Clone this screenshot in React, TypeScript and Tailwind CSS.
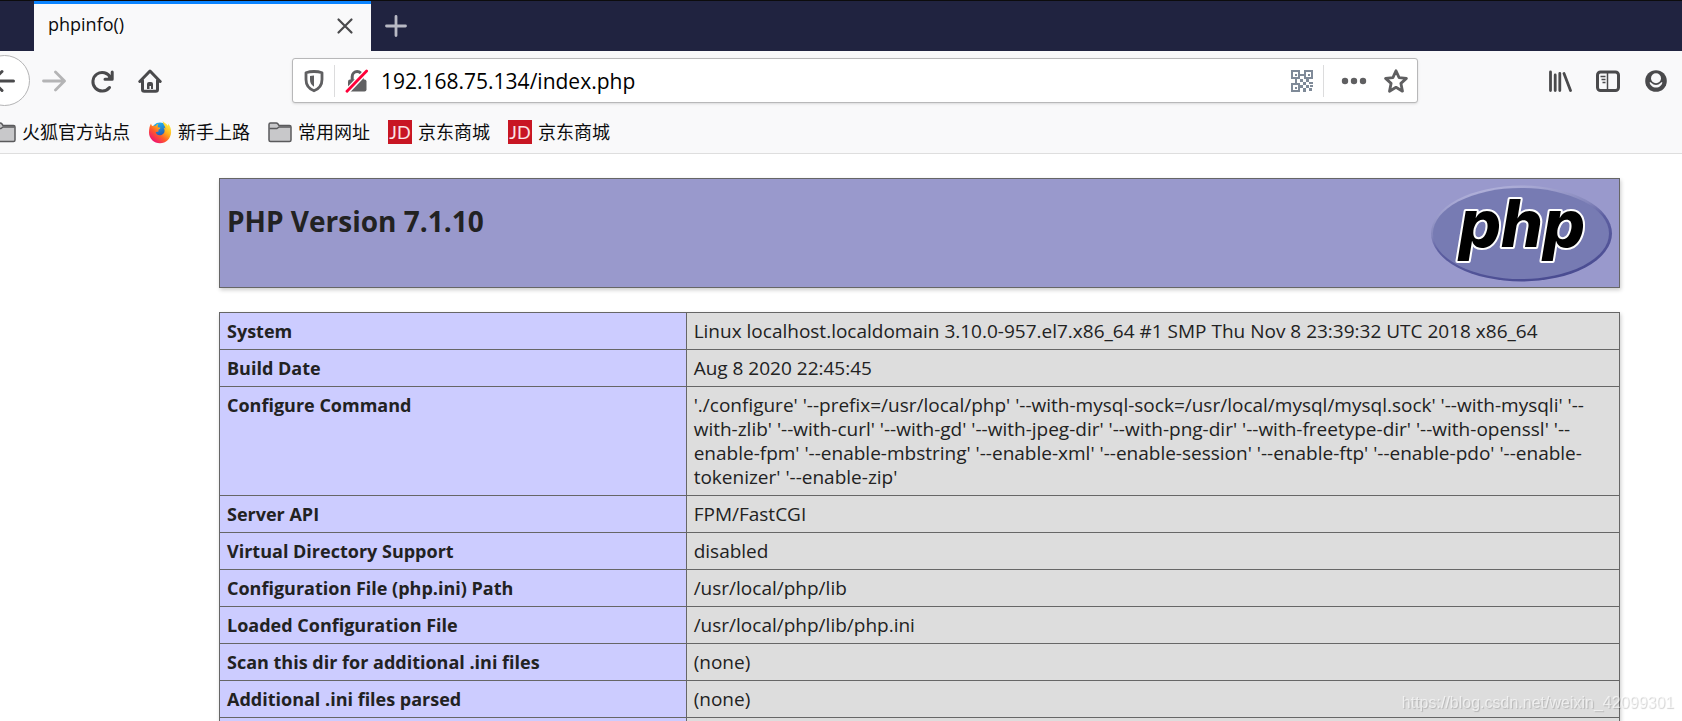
import { useState } from "react";
import type { ReactNode } from "react";

const info = [
  { name: "System", value: "Linux localhost.localdomain 3.10.0-957.el7.x86_64 #1 SMP Thu Nov 8 23:39:32 UTC 2018 x86_64" },
  { name: "Build Date", value: "Aug 8 2020 22:45:45" },
  {
    name: "Configure Command",
    value:
      "'./configure' '--prefix=/usr/local/php' '--with-mysql-sock=/usr/local/mysql/mysql.sock' '--with-mysqli' '--\nwith-zlib' '--with-curl' '--with-gd' '--with-jpeg-dir' '--with-png-dir' '--with-freetype-dir' '--with-openssl' '--\nenable-fpm' '--enable-mbstring' '--enable-xml' '--enable-session' '--enable-ftp' '--enable-pdo' '--enable-\ntokenizer' '--enable-zip'",
  },
  { name: "Server API", value: "FPM/FastCGI" },
  { name: "Virtual Directory Support", value: "disabled" },
  { name: "Configuration File (php.ini) Path", value: "/usr/local/php/lib" },
  { name: "Loaded Configuration File", value: "/usr/local/php/lib/php.ini" },
  { name: "Scan this dir for additional .ini files", value: "(none)" },
  { name: "Additional .ini files parsed", value: "(none)" },
  { name: "", value: "" },
];

function BackIcon() {
  return (
    <svg viewBox="0 0 24 24" className="h-6 w-6" fill="none" stroke="#4a4a4c" strokeWidth="3" strokeLinecap="round" strokeLinejoin="round">
      <path d="M22.5 12H2M11 2.5 1.5 12l9.500 9.500" />
    </svg>
  );
}

function ForwardIcon() {
  return (
    <svg viewBox="0 0 24 24" className="h-6 w-6" fill="none" stroke="#b4b4b5" strokeWidth="2.800" strokeLinecap="round" strokeLinejoin="round">
      <path d="M1.500 12H22M13.500 3l9 9-9 9" />
    </svg>
  );
}

function ReloadIcon() {
  return (
    <svg viewBox="0 0 24 24" className="h-6 w-6" fill="none" stroke="#4a4a4c" strokeWidth="3" strokeLinecap="round" strokeLinejoin="round">
      <path d="M19.500 18.500A9.300 9.300 0 1 1 20.500 8.500" />
      <path d="M22.200 3v7.200H15" />
      <path d="M22.200 6v4.200H17z" fill="#4a4a4c" strokeWidth="1" />
    </svg>
  );
}

function HomeIcon() {
  return (
    <svg viewBox="0 0 24 24" className="h-6 w-6" fill="none" stroke="#4a4a4c" strokeWidth="3" strokeLinecap="round" strokeLinejoin="round">
      <path d="M1.800 12.500 12 2l10.200 10.500" />
      <path d="M4.500 11.500v9q0 1.800 1.800 1.800h11.400q1.800 0 1.800-1.800v-9" />
      <path d="M9 20v-5q0-2 2-2h2q2 0 2 2v5h-2v-3h-1.500v3z" fill="#4a4a4c" stroke="none" />
    </svg>
  );
}

function ShieldIcon() {
  return (
    <svg viewBox="0 0 24 24" className="h-6 w-6 shrink-0">
      <path d="M12 2.500c3 0 5.500.4 8 1.300v6.700c0 5.500-3.500 9.500-8 11.300-4.500-1.800-8-5.800-8-11.300V3.800c2.500-.9 5-1.300 8-1.300z" fill="none" stroke="#5f5f61" strokeWidth="2.800" strokeLinejoin="round" />
      <path d="M12 6.500v11.200c-2.700-1.800-4-4.200-4-7.300V7.100c1.300-.4 2.600-.6 4-.6z" fill="#5f5f61" />
    </svg>
  );
}

function InsecureLockIcon() {
  return (
    <svg viewBox="0 0 24 24" className="h-6 w-6 shrink-0">
      <path d="M7.200 12V7.500a5 5 0 0 1 10 0V12" fill="none" stroke="#606062" strokeWidth="3" />
      <rect x="3" y="10.500" width="18.500" height="12" rx="2" fill="#606062" />
      <path d="M2.500 22 21.500 2.200" stroke="#fff" strokeWidth="5.500" />
      <path d="M2 22.200 21.600 2" stroke="#ff0039" strokeWidth="2.800" strokeLinecap="round" />
    </svg>
  );
}

function QrIcon() {
  return (
    <svg viewBox="0 0 22 22" className="h-[22px] w-[22px]" fill="#7f8a98" shapeRendering="crispEdges">
      <path fillRule="evenodd" d="M0 0h9v9H0zM2 2v5h5V2zM13 0h9v9h-9zM15 2v5h5V2zM0 13h9v9H0zM2 15v5h5v-5z" />
      <path d="M3.500 3.500h2v2h-2zM16.500 3.500h2v2h-2zM3.500 16.500h2v2h-2zM9 4h4v2H9zM4 9h2v4H4zM9 9h3v3H9zM12 12h3v3h-3zM15 9h3v3h-3zM18 12h4v2h-4zM9 15h3v3H9zM15 15h3v3h-3zM12 18h3v4h-3zM18 18h3v3h-3zM19 15h3v2h-3z" />
    </svg>
  );
}

function StarIcon() {
  return (
    <svg viewBox="0 0 24 24" className="h-6 w-6" fill="none" stroke="#5f5f61" strokeWidth="2.800" strokeLinejoin="round">
      <path d="m12 1.800 3.100 6.800 7.300.8-5.500 5 1.600 7.800-6.500-3.900-6.500 3.900 1.600-7.800-5.500-5 7.300-.8z" />
    </svg>
  );
}

function LibraryIcon() {
  return (
    <svg viewBox="0 0 24 24" className="h-6 w-6" fill="none" stroke="#4a4a4c" strokeWidth="2.800" strokeLinecap="round">
      <path d="M2.500 3v18.500M7.200 6v15.500M11.800 4.500v17M16 4.500l6.500 17" />
    </svg>
  );
}

function SidebarIcon() {
  return (
    <svg viewBox="0 0 24 24" className="h-6 w-6" fill="none" stroke="#4a4a4c">
      <rect x="1.500" y="3" width="21" height="18.500" rx="3" strokeWidth="3" />
      <path d="M11.500 3v18" strokeWidth="1.500" />
      <path d="M4.500 7.500h5M5.500 10.500h4M6.500 13.500h3" strokeWidth="1.500" />
    </svg>
  );
}

function AccountIcon() {
  return (
    <svg viewBox="0 0 24 24" className="h-6 w-6">
      <circle cx="12" cy="12" r="10.800" fill="#4a4a4c" />
      <path d="M5.600 13.200h12.800c-.6 3.200-3 5.300-6.400 5.300s-5.800-2.100-6.400-5.300z" fill="#f9f9fa" />
      <circle cx="12" cy="9.500" r="6.400" fill="#4a4a4c" />
      <circle cx="12" cy="9.200" r="5" fill="#f9f9fa" />
    </svg>
  );
}

function FolderIcon() {
  return (
    <svg viewBox="0 0 24 24" className="h-6 w-6 shrink-0" stroke="#5a5a5c" strokeWidth="1.500" strokeLinejoin="round">
      <path d="M1 20V4.500Q1 3 2.500 3h5.700q1 0 1.600.8L11 5.500h10.500Q23 5.500 23 7v13q0 1.500-1.500 1.500h-19Q1 21.500 1 20z" fill="#c8c8ca" />
      <path d="M1.500 8.500H9l2-1.500h11.500" fill="none" />
    </svg>
  );
}

function FirefoxIcon() {
  return (
    <svg viewBox="0 0 24 24" className="h-6 w-6 shrink-0">
      <defs>
        <linearGradient id="fire" x1="0.850" y1="0.100" x2="0.200" y2="0.900">
          <stop offset="0" stopColor="#fff044" />
          <stop offset="0.350" stopColor="#ffb21b" />
          <stop offset="0.650" stopColor="#ff5a2a" />
          <stop offset="1" stopColor="#f0146e" />
        </linearGradient>
        <linearGradient id="globe" x1="0.300" y1="0" x2="0.600" y2="1">
          <stop offset="0" stopColor="#20b6f4" />
          <stop offset="1" stopColor="#263e9e" />
        </linearGradient>
      </defs>
      <circle cx="12" cy="11" r="8.500" fill="url(#globe)" />
      <path
        fill="url(#fire)"
        d="M3 3.500c.2 1.200.6 2 1.200 2.600 1-.4 2.200-.5 3.300-.2C8.300 4.800 9.400 4 10.500 3.700 9.700 4.800 9.500 6.200 9.900 7.200c.8.3 1.800.4 2.500.5-.1 1-1 1.500-1.900 2 .2 1-.1 1.800-.3 2.200-1.300-.3-2-.1-2.600.4 1 2.900 3.600 3.500 5.900 2.600 3.500-1.300 3.800-5.200 2-7.200.8.1 1.500.5 2 1C17 5.500 14.900 4.300 14.700 1c1.300 1.800 3.800 2.400 5.200 4.700.3-.9.200-1.600 0-2.300 2.500 2.500 3.400 5.600 3.200 9.100-.4 6.300-5.100 10.800-11.100 10.800S1 18.800 1 12.600C1 9 1.600 5.900 3 3.500z"
      />
    </svg>
  );
}

function JdIcon() {
  return (
    <svg viewBox="0 0 24 24" className="h-6 w-6 shrink-0">
      <rect width="24" height="24" fill="#c81623" />
      <text x="12" y="19" textAnchor="middle" fontFamily="Lato, sans-serif" fontSize="18" fill="#fbe4e5">
        JD
      </text>
    </svg>
  );
}

function PhpLogo() {
  return (
    <svg viewBox="0 0 181 97" className="h-[97px] w-[181px] shrink-0 overflow-visible" role="img" aria-label="PHP logo">
      <defs>
        <linearGradient id="rim" x1="0.300" y1="0" x2="0.700" y2="1">
          <stop offset="0" stopColor="#b4b4dc" />
          <stop offset="0.350" stopColor="#8486bb" />
          <stop offset="0.500" stopColor="#5c5ea0" />
          <stop offset="1" stopColor="#484a90" />
        </linearGradient>
      </defs>
      <ellipse cx="90.500" cy="48.500" rx="90.500" ry="48" fill="url(#rim)" />
      <ellipse cx="90" cy="48.500" rx="88" ry="45.500" fill="#777bb3" />
      <text
        x="28"
        y="62"
        fontFamily="Inter, sans-serif"
        fontSize="66"
        fontWeight="800"
        fontStyle="italic"
        fill="#000"
        stroke="#fff"
        strokeWidth="4"
        strokeLinejoin="round"
        paintOrder="stroke"
      >
        php
      </text>
    </svg>
  );
}

function IconButton({ label, children }: { label: string; children: ReactNode }) {
  return (
    <button type="button" aria-label={label} className="flex h-6 w-6 shrink-0 items-center justify-center">
      {children}
    </button>
  );
}

function Bookmark({ icon, children }: { icon: ReactNode; children: ReactNode }) {
  return (
    <a href="#" className="flex shrink-0 items-center gap-1.5">
      {icon}
      <span>{children}</span>
    </a>
  );
}

function TabBar() {
  return (
    <div className="flex h-[51px] shrink-0 border-t border-[#0c0c0d] bg-[#202340] pl-[34px]">
      <div className="flex w-[337px] items-start justify-between border-t-[3px] border-[#0a84ff] bg-[#f9f9fa] pt-2 pr-4 pl-3.5">
        <span className="text-lg leading-6 text-[#0c0c0d]">phpinfo()</span>
        <button type="button" aria-label="Close tab" className="pt-1">
          <svg viewBox="0 0 20 20" className="h-5 w-5" stroke="#4a4a4c" strokeWidth="2.200" strokeLinecap="round">
            <path d="m3.500 3.500 13 13M16.500 3.500l-13 13" />
          </svg>
        </button>
      </div>
      <button type="button" aria-label="New tab" className="px-3.5">
        <svg viewBox="0 0 22 22" className="h-[22px] w-[22px]" stroke="#b8b9c4" strokeWidth="2.800" strokeLinecap="round">
          <path d="M11 1.500v19M1.500 11h19" />
        </svg>
      </button>
    </div>
  );
}

function NavBar() {
  const [url, setUrl] = useState("192.168.75.134/index.php");

  return (
    <div className="flex h-[59px] shrink-0 items-center pr-3.5">
      <button
        type="button"
        aria-label="Back"
        className="-ml-[21px] flex h-[51px] w-[51px] shrink-0 items-center justify-center rounded-full border border-[#b4b4b5] bg-white pr-1"
      >
        <BackIcon />
      </button>
      <div className="ml-3 flex gap-6">
        <IconButton label="Forward"><ForwardIcon /></IconButton>
        <IconButton label="Reload"><ReloadIcon /></IconButton>
        <IconButton label="Home"><HomeIcon /></IconButton>
      </div>
      <div className="mr-[130px] ml-[130px] flex h-[45px] min-w-0 flex-1 items-center rounded-[3px] border border-[#b8b8b9] bg-white pr-[9px] pl-[9px] shadow-sm">
        <ShieldIcon />
        <span className="mr-2.5 ml-2 h-8 w-px bg-[#dcdcdd]" />
        <InsecureLockIcon />
        <input
          aria-label="Address"
          value={url}
          onChange={(e) => setUrl(e.target.value)}
          className="ml-3 min-w-0 flex-1 bg-transparent pt-0.5 text-[21px] text-black outline-none"
        />
        <button type="button" aria-label="QR code"><QrIcon /></button>
        <span className="mr-[17px] ml-2.5 h-8 w-px bg-[#dcdcdd]" />
        <button type="button" aria-label="Page actions" className="mr-[17px]">
          <svg viewBox="0 0 26 8" className="h-2 w-[26px]" fill="#5f5f61">
            <circle cx="4" cy="4" r="3.200" />
            <circle cx="13" cy="4" r="3.200" />
            <circle cx="22" cy="4" r="3.200" />
          </svg>
        </button>
        <IconButton label="Bookmark this page"><StarIcon /></IconButton>
      </div>
      <div className="flex gap-6">
        <IconButton label="Library"><LibraryIcon /></IconButton>
        <IconButton label="Sidebars"><SidebarIcon /></IconButton>
        <IconButton label="Account"><AccountIcon /></IconButton>
      </div>
    </div>
  );
}

export default function App() {
  return (
    <div className="flex h-screen flex-col overflow-hidden bg-white font-['Open_Sans','Noto_Sans_CJK_SC',sans-serif]">
      <TabBar />
      <div className="shrink-0 border-b border-[#dedede] bg-[#f9f9fa]">
        <NavBar />
        <nav lang="zh-CN" className="-ml-2 flex h-[43px] items-center gap-[18px] text-lg text-[#0c0c0d]">
          <Bookmark icon={<FolderIcon />}>火狐官方站点</Bookmark>
          <Bookmark icon={<FirefoxIcon />}>新手上路</Bookmark>
          <Bookmark icon={<FolderIcon />}>常用网址</Bookmark>
          <Bookmark icon={<JdIcon />}>京东商城</Bookmark>
          <Bookmark icon={<JdIcon />}>京东商城</Bookmark>
        </nav>
      </div>

      <main className="min-h-0 flex-1 overflow-hidden pt-6 pr-[62px] pl-[219px] text-[#222]">
        <header className="mb-6 flex h-[110px] items-start justify-between border border-[#666] bg-[#9999cc] px-[7px] pt-1.5 shadow-[1px_2px_4px_#ccc]">
          <h1 className="pt-4 text-[28px] leading-10 font-bold">PHP Version 7.1.10</h1>
          <PhpLogo />
        </header>
        <table className="w-full table-fixed border-collapse text-lg leading-6 shadow-[1px_2px_4px_#ccc]">
          <colgroup>
            <col className="w-1/3" />
            <col />
          </colgroup>
          <tbody>
            {info.map((row) => (
              <tr key={row.name} className="h-[37px]">
                <th scope="row" className="border border-[#666] bg-[#ccccff] px-[7px] py-1.5 text-left align-top leading-6 font-bold">
                  {row.name}
                </th>
                <td className="border border-[#666] bg-[#dddddd] px-[7px] py-1.5 align-top text-[19px] leading-6 whitespace-pre">{row.value}</td>
              </tr>
            ))}
          </tbody>
        </table>
      </main>

      <p className="fixed right-2 bottom-2 font-['Liberation_Sans',sans-serif] text-base leading-5 text-white/60 [text-shadow:1px_1px_1px_rgb(0_0_0/0.18)]">
        https://blog.csdn.net/weixin_42099301
      </p>
    </div>
  );
}
